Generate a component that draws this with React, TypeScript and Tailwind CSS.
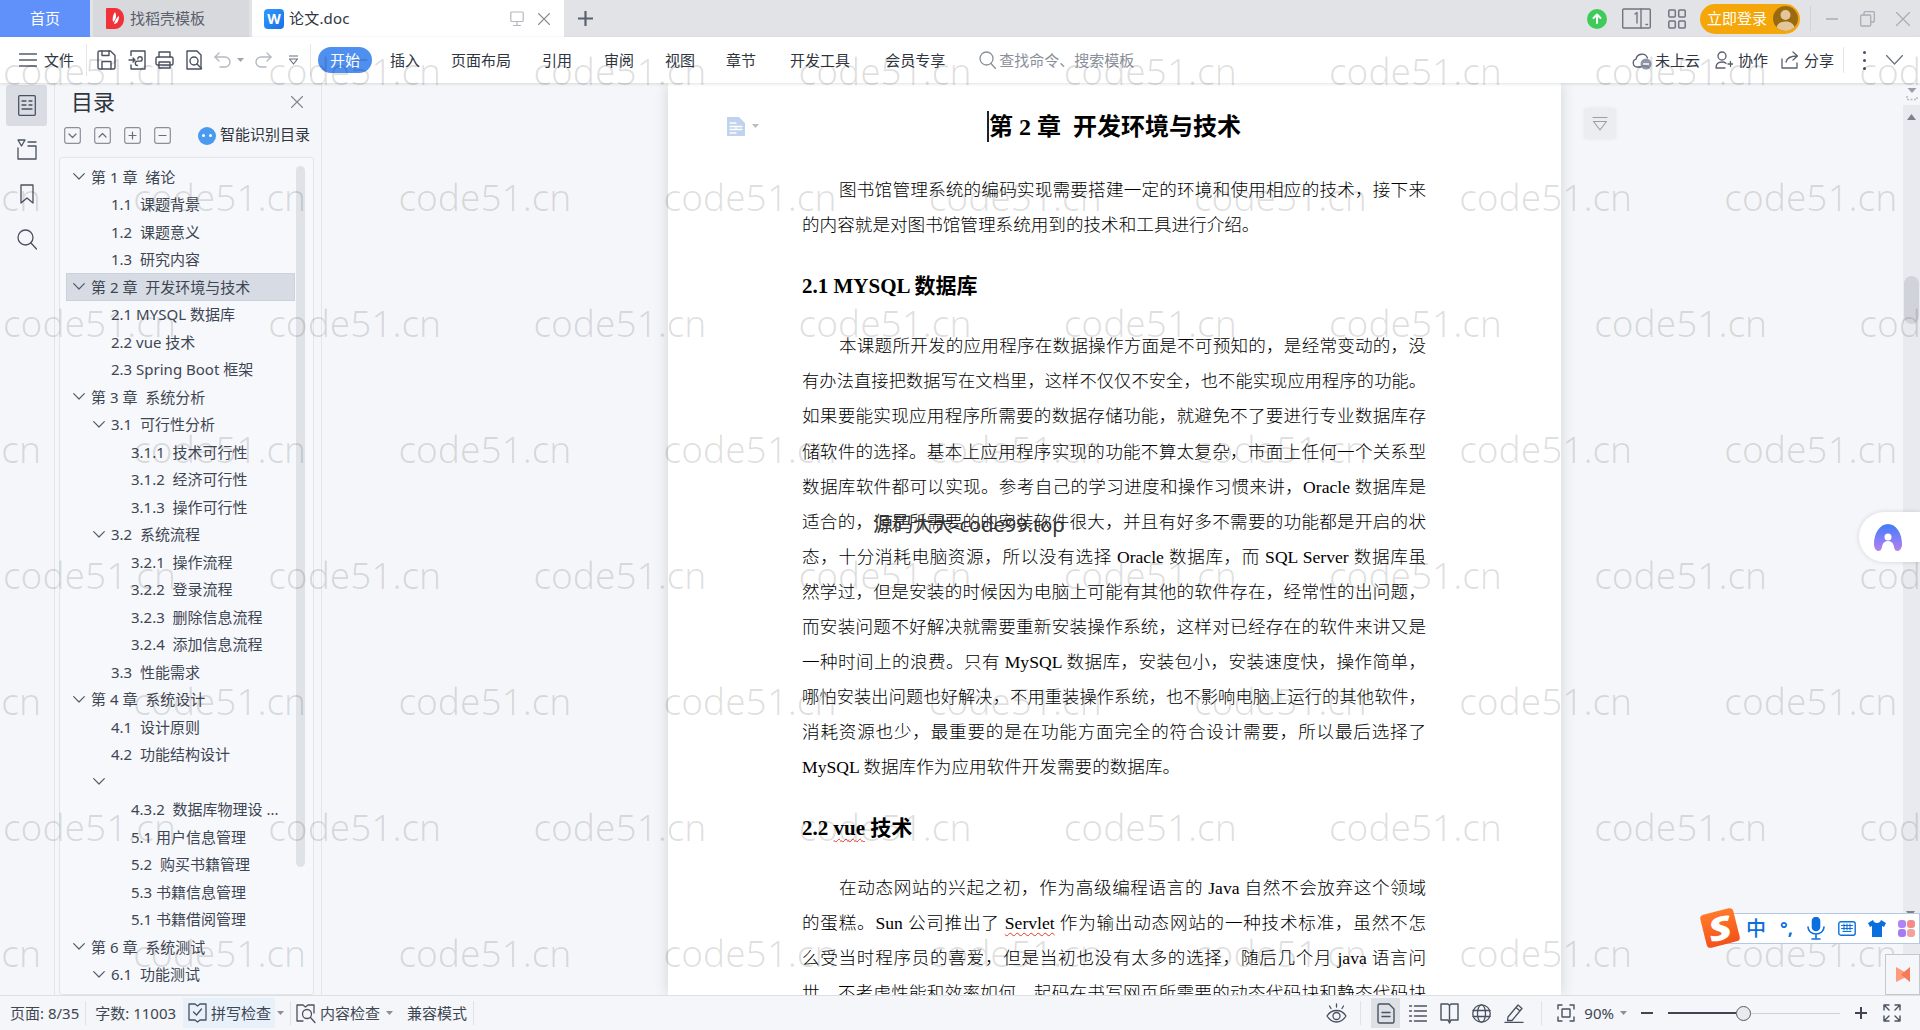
import React from "react";

const UI = "#4a5160";

function Ico({ w = 18, h = 18, vb, c = UI, sw = 1.4, children, className = "" }: { w?: number; h?: number; vb?: string; c?: string; sw?: number; children: React.ReactNode; className?: string }) {
  return (
    <svg width={w} height={h} viewBox={vb ?? `0 0 ${w} ${h}`} fill="none" stroke={c} strokeWidth={sw} strokeLinecap="round" strokeLinejoin="round" className={"shrink-0 " + className}>
      {children}
    </svg>
  );
}

function Caret({ className = "", c = "#8a8f99" }: { className?: string; c?: string }) {
  return (
    <svg width="7" height="4" viewBox="0 0 7 4" className={"shrink-0 " + className}>
      <path d="M0 0h7L3.5 4z" fill={c} />
    </svg>
  );
}

function TitleBar() {
  return (
    <div className="flex h-[37px] shrink-0 items-stretch bg-[#e1e3e7] text-[15px]">
      <div className="flex w-[90px] items-center justify-center bg-[#6090fa] text-white">首页</div>
      <div className="ml-[3px] flex w-[156px] items-center bg-[#d8d9dd] pl-[13px] text-[#5a606c]">
        <svg width="18" height="21" viewBox="0 0 18 21" className="shrink-0">
          <path d="M1 0h8c5 0 9 4.500 9 10.500S14 21 9 21H1a1 1 0 0 1-1-1V1a1 1 0 0 1 1-1z" fill="#f0313a" />
          <path d="M9 4c-2 3-3 6-2 10 3-2 4-6 2-10zM13 8c-2 1-4 4-5 8 3 0 5-3 5-8z" fill="#fff" />
        </svg>
        <span className="ml-[6px]">找稻壳模板</span>
      </div>
      <div className="ml-[3px] flex w-[312px] items-center bg-white pl-[12px] text-[#30353f]">
        <div className="flex h-[20px] w-[20px] shrink-0 items-center justify-center rounded-[4px] bg-gradient-to-br from-[#2f9bff] to-[#1a6fe8] text-[14px] font-bold leading-none text-white">W</div>
        <span className="ml-[5px] tracking-[0.2px]">论文.doc</span>
        <Ico w={14} h={16} c="#b4b8c0" sw={1.2} className="ml-[160px]">
          <rect x="0.8" y="1" width="12.400" height="9.500" rx="1" />
          <path d="M7 10.500v3.500M3.500 14.500h7" />
        </Ico>
        <Ico w={12} h={12} c="#8b909a" sw={1.2} className="ml-[14px]">
          <path d="M0.500 0.500l11 11M11.500 0.500l-11 11" />
        </Ico>
      </div>
      <div className="ml-[14px] flex items-center">
        <Ico w={15} h={15} c="#59606e" sw={2.2}>
          <path d="M7.500 0.500v14M0.500 7.500h14" />
        </Ico>
      </div>
      <div className="ml-auto flex items-center">
        <div className="flex h-[20px] w-[20px] items-center justify-center rounded-full bg-[#3ecb5a]">
          <Ico w={10} h={11} c="#fff" sw={2}>
            <path d="M5 10V2M1.500 5L5 1.500 8.500 5" />
          </Ico>
        </div>
        <Ico w={29} h={21} sw={1.4} c="#6f7583" className="ml-[15px]">
          <rect x="0.700" y="1" width="27.600" height="19" rx="1" />
          <path d="M19 1v19" />
          <path d="M24 16.500h1.500" />
          <path d="M13 6l2-1.500V15" />
        </Ico>
        <Ico w={18} h={20} c="#6f7583" sw={1.5} className="ml-[17px]">
          <rect x="0.800" y="1" width="6.500" height="7" rx="1" />
          <rect x="10.700" y="1" width="6.500" height="7" rx="1" />
          <rect x="0.800" y="12" width="6.500" height="7" rx="1" />
          <rect x="10.700" y="12" width="6.500" height="7" rx="1" />
        </Ico>
        <div className="ml-[14px] flex h-[30px] w-[100px] items-center rounded-full bg-[#f5a70a] pl-[7px] text-white">
          <span>立即登录</span>
          <div className="ml-[6px] flex h-[25px] w-[25px] items-center justify-center overflow-hidden rounded-full bg-[#9a6a10]">
            <svg width="25" height="25" viewBox="0 0 25 25">
              <circle cx="12.500" cy="9" r="5" fill="#e3c79a" />
              <path d="M3 25c0-7 4-9.500 9.500-9.500S22 18 22 25z" fill="#e3c79a" />
            </svg>
          </div>
        </div>
        <div className="ml-[10px] h-[25px] w-px bg-[#cfd2d8]" />
        <Ico w={12} h={2} c="#a8adb6" sw={1.3} className="ml-[15px]">
          <path d="M0 1h12" />
        </Ico>
        <Ico w={15} h={16} c="#a8adb6" sw={1.3} className="ml-[22px]">
          <rect x="0.700" y="4" width="10" height="11" rx="1" />
          <path d="M4 4V1.700a1 1 0 0 1 1-1h8.300a1 1 0 0 1 1 1V10a1 1 0 0 1-1 1h-2.600" />
        </Ico>
        <Ico w={14} h={14} c="#a8adb6" sw={1.3} className="ml-[21px] mr-[10px]">
          <path d="M0.500 0.500l13 13M13.500 0.500l-13 13" />
        </Ico>
      </div>
    </div>
  );
}

function Tab({ t, ml }: { t: string; ml: string }) {
  return <span className={ml + " text-[#30353f]"}>{t}</span>;
}

function Toolbar() {
  return (
    <div className="relative z-10 flex h-[46px] shrink-0 items-center bg-white text-[15px] shadow-[0_1px_3px_rgba(0,0,0,0.12)]">
      <Ico w={18} h={14} c="#555c69" sw={1.3} className="ml-[19px]">
        <path d="M0.500 1h17M0.500 7h17M0.500 13h17" />
      </Ico>
      <span className="ml-[7px] text-[#30353f]">文件</span>
      <div className="ml-[12px] h-[32px] w-px bg-[#e4e6ea]" />
      <Ico w={19} h={20} c={UI} sw={1.4} className="ml-[10px]">
        <path d="M1 2.500a1.500 1.500 0 0 1 1.500-1.500h11L18 5.500v12a1.500 1.500 0 0 1-1.500 1.500h-14A1.500 1.500 0 0 1 1 17.500z" />
        <path d="M5 19v-7.500h9V19M5 1v4.500h7V1" />
      </Ico>
      <Ico w={18} h={20} c={UI} sw={1.4} className="ml-[12px]">
        <path d="M3 5.500V1h14v18H3v-4" />
        <path d="M1 10h6M5 8l2 2-2 2" />
        <path d="M9.500 15.500a2.200 2.200 0 0 1 0-4.400h2.500a2.200 2.200 0 0 0 0-4.400 2.200 2.200 0 0 0-2.200 2.200" />
      </Ico>
      <Ico w={19} h={20} c={UI} sw={1.4} className="ml-[9px]">
        <path d="M4 7V2h11v5" />
        <rect x="1" y="7" width="17" height="8" rx="1.500" />
        <path d="M4 12h11v6H4z" />
      </Ico>
      <Ico w={18} h={20} c={UI} sw={1.4} className="ml-[11px]">
        <path d="M12 1H2v18h14V5z" />
        <circle cx="9" cy="11" r="4" />
        <path d="M12 14l4.500 4.500" />
      </Ico>
      <Ico w={17} h={17} c="#b5b9c1" sw={1.4} className="ml-[11px]">
        <path d="M1 5h10a5 5 0 0 1 0 10H6" />
        <path d="M5 1L1 5l4 4" />
      </Ico>
      <Caret className="ml-[6px]" c="#a0a4ac" />
      <Ico w={17} h={17} c="#b5b9c1" sw={1.4} className="ml-[11px]">
        <path d="M16 5H6a5 5 0 0 0 0 10h5" />
        <path d="M12 1l4 4-4 4" />
      </Ico>
      <Ico w={9} h={10} c="#6a707c" sw={1.2} className="ml-[17px]">
        <path d="M0.500 1h8M0.500 4h8L4.500 9z" />
      </Ico>
      <div className="ml-[12px] h-[32px] w-px bg-[#e4e6ea]" />
      <div className="ml-[7px] flex h-[26px] w-[54px] items-center justify-center rounded-full bg-[#4e8ff0] text-white">开始</div>
      <Tab t="插入" ml="ml-[18px]" />
      <Tab t="页面布局" ml="ml-[31px]" />
      <Tab t="引用" ml="ml-[31px]" />
      <Tab t="审阅" ml="ml-[32px]" />
      <Tab t="视图" ml="ml-[31px]" />
      <Tab t="章节" ml="ml-[31px]" />
      <Tab t="开发工具" ml="ml-[34px]" />
      <Tab t="会员专享" ml="ml-[35px]" />
      <Ico w={17} h={18} c="#8a8f99" sw={1.3} className="ml-[34px]">
        <circle cx="7.500" cy="7.500" r="6.500" />
        <path d="M12 12.500l4.500 5" />
      </Ico>
      <span className="ml-[3px] text-[#8a8f99]">查找命令、搜索模板</span>
      <div className="ml-auto flex items-center">
        <Ico w={20} h={20} c="#5a606c" sw={1.3}>
          <path d="M9 17H5a4 4 0 0 1-1-7.800A6 6 0 0 1 15.500 8" />
          <circle cx="14" cy="14" r="5.500" fill="#8f96a5" stroke="none" />
          <path d="M11.500 14h5" stroke="#fff" />
        </Ico>
        <span className="ml-[3px] text-[#30353f]">未上云</span>
        <Ico w={18} h={18} c="#5a606c" sw={1.3} className="ml-[15px]">
          <circle cx="7" cy="5" r="4" />
          <path d="M1 17c0-4 2.500-6 6-6 1.500 0 3 .4 4 1.300M1 17h9M13 13h5M15.500 10.500v5" />
        </Ico>
        <span className="ml-[5px] text-[#30353f]">协作</span>
        <Ico w={18} h={18} c="#5a606c" sw={1.3} className="ml-[13px]">
          <path d="M1 8v9h15v-5" />
          <path d="M5 11c1-4 4-6 11-6M12 1l4.500 4L12 9" />
        </Ico>
        <span className="ml-[5px] text-[#30353f]">分享</span>
        <div className="ml-[9px] h-[26px] w-px bg-[#e4e6ea]" />
        <div className="ml-[19px] flex flex-col gap-[5px]">
          <div className="h-[3px] w-[3px] rounded-full bg-[#4a5160]" />
          <div className="h-[3px] w-[3px] rounded-full bg-[#4a5160]" />
          <div className="h-[3px] w-[3px] rounded-full bg-[#4a5160]" />
        </div>
        <Ico w={17} h={10} c="#6a707c" sw={1.2} className="ml-[20px] mr-[17px]">
          <path d="M0.500 0.500L8.500 9l8-8.500" />
        </Ico>
      </div>
    </div>
  );
}

function Rail() {
  return (
    <div className="flex w-[55px] shrink-0 flex-col items-center border-r border-[#e2e5ea] pt-[2px] pr-[1px]">
      <div className="flex h-[41px] w-[41px] items-center justify-center rounded-[3px] bg-[#d9dde3]">
        <Ico w={18} h={21} c="#4a5160" sw={1.3}>
          <rect x="0.700" y="0.700" width="16.600" height="19.600" rx="1" />
          <path d="M4 6h4M11 6h3M4 10h4M11 10h3M4 14h10" />
        </Ico>
      </div>
      <Ico w={20} h={21} c={UI} sw={1.3} className="mt-[13px]">
        <path d="M1 1h7L4.500 7zM11 3h8M1 9v11h18V7H11" />
      </Ico>
      <Ico w={14} h={20} c={UI} sw={1.3} className="mt-[24px]">
        <path d="M1 1h12v18l-6-5-6 5z" />
      </Ico>
      <Ico w={20} h={21} c={UI} sw={1.3} className="mt-[25px]">
        <circle cx="8.500" cy="8.500" r="7.500" />
        <path d="M14 14l5.500 6" />
      </Ico>
    </div>
  );
}

type Row = [number, string, boolean?];
const rows: Row[] = [
  [1, "第 1 章  绪论", true],
  [2, "1.1  课题背景"],
  [2, "1.2  课题意义"],
  [2, "1.3  研究内容"],
  [1, "第 2 章  开发环境与技术", true],
  [2, "2.1 MYSQL 数据库"],
  [2, "2.2 vue 技术"],
  [2, "2.3 Spring Boot 框架"],
  [1, "第 3 章  系统分析", true],
  [2, "3.1  可行性分析", true],
  [3, "3.1.1  技术可行性"],
  [3, "3.1.2  经济可行性"],
  [3, "3.1.3  操作可行性"],
  [2, "3.2  系统流程", true],
  [3, "3.2.1  操作流程"],
  [3, "3.2.2  登录流程"],
  [3, "3.2.3  删除信息流程"],
  [3, "3.2.4  添加信息流程"],
  [2, "3.3  性能需求"],
  [1, "第 4 章  系统设计", true],
  [2, "4.1  设计原则"],
  [2, "4.2  功能结构设计"],
  [2, "", true],
  [3, "4.3.2  数据库物理设 ..."],
  [3, "5.1 用户信息管理"],
  [3, "5.2  购买书籍管理"],
  [3, "5.3 书籍信息管理"],
  [3, "5.1 书籍借阅管理"],
  [1, "第 6 章  系统测试", true],
  [2, "6.1  功能测试", true],
];

function TreeRow({ row, active }: { row: Row; active: boolean }) {
  const [lvl, text, chev] = row;
  const pad = chev ? (lvl === 1 ? "pl-[7px]" : "pl-[27px]") : lvl === 2 ? "pl-[45px]" : "pl-[65px]";
  return (
    <div className={"flex h-[27.5px] items-center whitespace-pre text-[15px] text-[#3f4653] " + pad + (active ? " bg-[#d6dbe4] outline outline-1 -outline-offset-1 outline-[#cbd2dd]" : "")}>
      {chev && (
        <Ico w={12} h={7} c="#555c69" sw={1.2} className="mr-[6px]">
          <path d="M0.700 0.700L6 6l5.300-5.300" />
        </Ico>
      )}
      <span>{text}</span>
    </div>
  );
}

function SquareBtn({ d }: { d: string }) {
  return (
    <Ico w={17} h={17} c="#8a8f99" sw={1.2}>
      <rect x="0.700" y="0.700" width="15.600" height="15.600" rx="2" />
      <path d={d} stroke="#666c78" />
    </Ico>
  );
}

function Panel() {
  return (
    <div className="flex w-[267px] shrink-0 flex-col border-r border-[#e2e5ea]">
      <div className="flex h-[37px] shrink-0 items-center pl-[16px]">
        <span className="text-[22px] text-[#30353f]">目录</span>
        <Ico w={12} h={12} c="#80858f" sw={1.1} className="ml-[176px]">
          <path d="M0.500 0.500l11 11M11.500 0.500l-11 11" />
        </Ico>
      </div>
      <div className="mt-[7px] flex h-[17px] shrink-0 items-center pl-[9px]">
        <div className="flex gap-[13px]">
          <SquareBtn d="M5 7l3.500 3.500L12 7" />
          <SquareBtn d="M5 10l3.500-3.500L12 10" />
          <SquareBtn d="M5 8.500h7M8.500 5v7" />
          <SquareBtn d="M5 8.500h7" />
        </div>
        <div className="ml-[27px] flex h-[18px] w-[18px] items-center justify-center gap-[4px] rounded-full bg-[#4a9bf0]">
          <div className="h-[3px] w-[3px] rounded-full bg-white" />
          <div className="h-[3px] w-[3px] rounded-full bg-white" />
        </div>
        <span className="mb-[2px] ml-[4px] whitespace-nowrap text-[15px] text-[#30353f]">智能识别目录</span>
      </div>
      <div className="ml-[4px] mt-[13px] flex min-h-0 w-[255px] flex-1 overflow-hidden rounded-[3px] border border-[#e2e5ea] bg-[#f6f8fb]">
        <div className="ml-[6px] w-[229px] shrink-0 pt-[5px]">
          {rows.map((r, i) => (
            <TreeRow key={i} row={r} active={i === 4} />
          ))}
        </div>
        <div className="ml-px mt-[8px] h-[701px] w-[9px] shrink-0 rounded-full bg-[#dfe2e6]" />
      </div>
    </div>
  );
}

const LINE = "h-[35.1px] leading-[35.1px] overflow-visible";
const JUST = " text-justify [text-align-last:justify]";

function L({ children, indent, last, tight }: { children: React.ReactNode; indent?: boolean; last?: boolean; tight?: boolean }) {
  return <div className={LINE + (last ? "" : JUST) + (indent ? " pl-[37px]" : "") + (tight ? " text-[17.2px]" : "")}>{children}</div>;
}

const Sq = ({ children }: { children: React.ReactNode }) => (
  <span className="underline decoration-[#e0392b] decoration-wavy decoration-1 underline-offset-[3px]">{children}</span>
);

function DocPage() {
  return (
    <div className="h-full w-[893px] shrink-0 overflow-hidden bg-white font-['Liberation_Serif','Noto_Sans_CJK_SC',serif] text-black shadow-[0_0_14px_rgba(0,0,0,0.14)]">
      <div className="ml-[59px] mt-[23px] flex h-[40px] items-center">
        <Ico w={18} h={19} c="#fff" sw={1.3}>
          <path d="M0 0h12l6 6v13H0z" fill="#bfd2ee" stroke="none" />
          <path d="M3 6h6M3 9.500h12M9 9.500v3M3 12.500h12M3 16h6" />
        </Ico>
        <Caret className="ml-[7px]" c="#b8bcc4" />
        <div className="ml-[228px] h-[31px] w-[2px] shrink-0 bg-[#1d2230]" />
        <div className="mt-[2px] whitespace-pre text-[24px] font-bold leading-none">第 2 章  开发环境与技术</div>
      </div>
      <div className="ml-[134px] w-[624px] text-[17.6px] font-light">
        <div className="mt-[26.5px]">
          <L indent>图书馆管理系统的编码实现需要搭建一定的环境和使用相应的技术，接下来</L>
          <L last>的内容就是对图书馆管理系统用到的技术和工具进行介绍。</L>
        </div>
        <div className="mt-[25px] h-[35.1px] pt-px text-[21px] font-bold leading-[35.1px]">2.1 MYSQL 数据库</div>
        <div className="mt-[26.5px]">
          <L indent>本课题所开发的应用程序在数据操作方面是不可预知的，是经常变动的，没</L>
          <L tight>有办法直接把数据写在文档里，这样不仅仅不安全，也不能实现应用程序的功能。</L>
          <L>如果要能实现应用程序所需要的数据存储功能，就避免不了要进行专业数据库存</L>
          <L>储软件的选择。基本上应用程序实现的功能不算太复杂，市面上任何一个关系型</L>
          <L>数据库软件都可以实现。参考自己的学习进度和操作习惯来讲，Oracle 数据库是</L>
          <div className="relative">
            <L>适合的，但是所需要的的安装软件很大，并且有好多不需要的功能都是开启的状</L>
            <span className="absolute left-[71px] top-[2px] whitespace-nowrap font-['Noto_Sans','Noto_Sans_CJK_SC',sans-serif] text-[20px] font-normal leading-[35px] text-[#333]">源码大大-code99.top</span>
          </div>
          <L>态，十分消耗电脑资源，所以没有选择 Oracle 数据库，而 SQL Server 数据库虽</L>
          <L>然学过，但是安装的时候因为电脑上可能有其他的软件存在，经常性的出问题，</L>
          <L>而安装问题不好解决就需要重新安装操作系统，这样对已经存在的软件来讲又是</L>
          <L>一种时间上的浪费。只有 MySQL 数据库，安装包小，安装速度快，操作简单，</L>
          <L tight>哪怕安装出问题也好解决，不用重装操作系统，也不影响电脑上运行的其他软件，</L>
          <L>消耗资源也少，最重要的是在功能方面完全的符合设计需要，所以最后选择了</L>
          <L last>MySQL 数据库作为应用软件开发需要的数据库。</L>
        </div>
        <div className="mt-[25px] h-[35.1px] text-[21px] font-bold leading-[35.1px]">
          2.2 <Sq>vue</Sq> 技术
        </div>
        <div className="mt-[25px]">
          <L indent>在动态网站的兴起之初，作为高级编程语言的 Java 自然不会放弃这个领域</L>
          <L>的蛋糕。Sun 公司推出了 <Sq>Servlet</Sq> 作为输出动态网站的一种技术标准，虽然不怎</L>
          <L>么受当时程序员的喜爱，但是当初也没有太多的选择，随后几个月 java 语言问</L>
          <L>世，不考虑性能和效率如何，起码在书写网页所需要的动态代码块和静态代码块</L>
        </div>
      </div>
    </div>
  );
}

function RightGutter() {
  return (
    <div className="flex min-w-0 flex-1">
      <div className="flex-1 pl-[23px] pt-[25px]">
        <div className="flex h-[31px] w-[32px] items-center justify-center rounded-[3px] bg-[#ecedef] shadow-[0_0_4px_rgba(0,0,0,0.06)]">
          <Ico w={16} h={16} c="#9a9ea6" sw={1.1}>
            <path d="M1 1.500h14M1.500 5.500h13L8 14z" />
          </Ico>
        </div>
      </div>
      <div className="flex w-[17px] shrink-0 flex-col items-center bg-[#e8eaef]">
        <div className="flex h-[22px] w-full items-center justify-center bg-[#f4f6f9]">
          <svg width="12" height="13" viewBox="0 0 12 13">
            <path d="M1.500 0h9L6 5z" fill="#9aa0ab" />
            <path d="M1 8v3.500h10V8" stroke="#b5b9c2" strokeWidth="1.500" strokeDasharray="2 1.500" fill="none" />
          </svg>
        </div>
        <svg width="9" height="6" viewBox="0 0 9 6" className="mt-[9px]">
          <path d="M0 6L4.500 0 9 6z" fill="#7b818d" />
        </svg>
        <div className="mt-[156px] h-[48px] w-[15px] rounded-full bg-[#d0d4da]" />
      </div>
    </div>
  );
}

function StatusSep({ ml }: { ml: string }) {
  return <div className={ml + " h-[24px] w-px bg-[#dfe2e6]"} />;
}

function StatusBar() {
  return (
    <div className="flex h-[35px] shrink-0 items-center border-t border-[#dcdfe4] bg-[#f4f6f9] text-[15px] text-[#3f4653]">
      <span className="ml-[10px] whitespace-nowrap">页面: 8/35</span>
      <StatusSep ml="ml-[6px]" />
      <span className="ml-[9px] whitespace-nowrap">字数: 11003</span>
      <div className="ml-[7px] flex h-[30px] w-[92px] items-center bg-[#e8f0fa] pl-[5px]">
        <Ico w={19} h={20} c={UI} sw={1.3}>
          <path d="M1 1h6l2.500 2L12 1h6v16h-6l-2.500 2L7 17H1z" />
          <path d="M5.500 9l3 3 5-6" />
        </Ico>
        <span className="ml-[4px] whitespace-nowrap">拼写检查</span>
      </div>
      <Caret className="ml-[2px]" />
      <StatusSep ml="ml-[6px]" />
      <Ico w={20} h={21} c={UI} sw={1.3} className="ml-[5px]">
        <path d="M7 18H1V2h6l2.500 2L12 2h6v8" />
        <circle cx="11" cy="11" r="4.500" />
        <path d="M14.500 14.500l4.500 5" />
      </Ico>
      <span className="ml-[4px] whitespace-nowrap">内容检查</span>
      <Caret className="ml-[6px]" />
      <span className="ml-[14px] whitespace-nowrap">兼容模式</span>
      <StatusSep ml="ml-[6px]" />
      <div className="ml-auto flex items-center">
        <Ico w={21} h={21} c={UI} sw={1.3}>
          <path d="M1 13c2.500-4 6-5.500 9.500-5.500S17.500 9 20 13c-2.500 4-6 6-9.500 6S3.500 17 1 13z" />
          <circle cx="10.500" cy="13" r="3.500" />
          <path d="M10.500 1v3M3.500 3l1.500 2.500M17.500 3L16 5.500" />
        </Ico>
        <div className="ml-[13px] h-[24px] w-px bg-[#dfe2e6]" />
        <div className="ml-[10px] flex h-[30px] w-[29px] items-center justify-center bg-[#dde1e6]">
          <Ico w={18} h={21} c={UI} sw={1.4}>
            <path d="M1 2.500A1.500 1.500 0 0 1 2.500 1H12l5 5v12.500a1.500 1.500 0 0 1-1.500 1.500h-13A1.500 1.500 0 0 1 1 18.500z" />
            <path d="M5 9.500h8M5 13.500h8" />
          </Ico>
        </div>
        <Ico w={18} h={19} c={UI} sw={1.4} className="ml-[9px]">
          <path d="M0.500 2h2M5.500 2h12M0.500 7h2M5.500 7h12M0.500 12h2M5.500 12h12M0.500 17h2M5.500 17h12" />
        </Ico>
        <Ico w={19} h={21} c={UI} sw={1.4} className="ml-[13px]">
          <path d="M1 1h7l1.500 1.500L11 1h7v16h-7l-1.500 3L8 17H1zM9.500 2.500V17" />
        </Ico>
        <Ico w={19} h={19} c={UI} sw={1.3} className="ml-[13px]">
          <circle cx="9.500" cy="9.500" r="8.700" />
          <ellipse cx="9.500" cy="9.500" rx="4" ry="8.700" />
          <path d="M1 6.500h17M1 12.500h17" />
        </Ico>
        <Ico w={20} h={20} c={UI} sw={1.3} className="ml-[13px]">
          <path d="M4 14L14 2l4 3.500-10 12H3.500zM12 4.500l4 3.500M1 19.500h18" />
        </Ico>
        <div className="ml-[17px] h-[24px] w-px bg-[#dfe2e6]" />
        <Ico w={18} h={18} c={UI} sw={1.4} className="ml-[15px]">
          <path d="M1 5V1h4M13 1h4v4M17 13v4h-4M5 17H1v-4" />
          <rect x="5" y="5" width="8" height="8" rx="0.500" />
        </Ico>
        <span className="ml-[9px] whitespace-nowrap">90%</span>
        <Caret className="ml-[6px]" />
        <div className="ml-[14px] h-[2px] w-[12px] bg-[#3f4653]" />
        <div className="ml-[15px] flex h-[15px] w-[172px] items-center">
          <div className="h-[1.500px] w-[68px] bg-[#3f4653]" />
          <div className="h-[15px] w-[15px] shrink-0 rounded-full border-[1.500px] border-[#555c69] bg-[#e8eaee]" />
          <div className="h-px flex-1 bg-[#cfd3d9]" />
        </div>
        <Ico w={12} h={12} c="#3f4653" sw={2} className="ml-[15px]">
          <path d="M6 0.500v11M0.500 6h11" />
        </Ico>
        <Ico w={18} h={18} c={UI} sw={1.4} className="ml-[16px] mr-[19px]">
          <path d="M6 1H1v5M1 1l5 5M12 1h5v5M17 1l-5 5M1 12v5h5M1 17l5-5M17 12v5h-5M17 17l-5-5" />
        </Ico>
      </div>
    </div>
  );
}

function Watermark() {
  const rowsN = [0, 1, 2, 3, 4, 5, 6, 7];
  const cols = [0, 1, 2, 3, 4, 5, 6, 7];
  return (
    <div className="pointer-events-none absolute inset-x-0 bottom-[35px] top-[37px] z-20 overflow-hidden">
      <div className="-mt-[29px] font-['Noto_Sans',sans-serif] text-[37px] font-light text-[#00000021]">
        {rowsN.map((r) => (
          <div key={r} className={"flex h-[126px] items-center " + (r % 2 === 0 ? "ml-[3px]" : "-ml-[132px]")}>
            {cols.concat(r % 2 === 0 ? [] : [8]).map((c) => (
              <span key={c} className="w-[265.2px] shrink-0">code51.cn</span>
            ))}
          </div>
        ))}
      </div>
    </div>
  );
}

function Floaters() {
  return (
    <>
      <div className="absolute right-0 top-[512px] z-30 flex h-[50px] w-[61px] items-center rounded-l-full bg-white pl-[15px] shadow-[0_0_5px_rgba(0,0,0,0.14)]">
        <svg width="28" height="27" viewBox="0 0 28 27">
          <defs>
            <linearGradient id="aig" x1="0" y1="0" x2="0" y2="1">
              <stop offset="0" stopColor="#3f7dfb" />
              <stop offset="1" stopColor="#b67ff0" />
            </linearGradient>
          </defs>
          <path fillRule="evenodd" d="M14 0c8 0 14 9 14 20 0 4-2 7-4.500 7-3 0-3-3-4-6-.8-2.500-3-4-5.500-4s-4.700 1.500-5.500 4c-1 3-1 6-4 6C2 27 0 24 0 20 0 9 6 0 14 0zm0 9.500a3.500 3.500 0 1 0 0 7 3.500 3.500 0 0 0 0-7z" fill="url(#aig)" />
        </svg>
      </div>
      <div className="absolute left-[1703px] top-[911px] z-30 flex w-[217px] items-center">
        <div className="z-10 flex h-[34px] w-[34px] shrink-0 rotate-[-14deg] items-center justify-center rounded-[4px] bg-gradient-to-b from-[#ff7a2a] to-[#f4501a] text-[32px] font-black italic leading-none text-white">
          <span className="inline-block scale-x-[1.35]">S</span>
        </div>
        <div className="-ml-[12px] flex h-[31px] flex-1 items-center border border-[#b3c9e6] bg-white pl-[20px] text-[#0c6fde]">
          <span className="font-['Noto_Sans_CJK_SC',sans-serif] text-[20px] font-medium leading-none">中</span>
          <span className="ml-[14px] w-[14px] text-[18px] font-bold leading-none">°,</span>
          <Ico w={18} h={23} c="#0c6fde" sw={1.6} className="ml-[13px]">
            <rect x="5.500" y="0.500" width="7" height="13" rx="3.500" fill="#0c6fde" />
            <path d="M1 10c0 4 3.500 7 8 7s8-3 8-7M9 17v4M5 22h8" />
          </Ico>
          <Ico w={18} h={15} c="#0c6fde" sw={1.4} className="ml-[13px]">
            <rect x="0.800" y="0.800" width="16.400" height="13.400" rx="2" />
            <path d="M3.500 4.500h11M3.500 7.500h11M5 10.500h8M6 3v6M9 3v6M12 3v6" strokeWidth="1.100" />
          </Ico>
          <svg width="18" height="17" viewBox="0 0 18 17" className="ml-[12px] shrink-0">
            <path d="M5 0L0 3l2 4 2-1v11h10V6l2 1 2-4-5-3c-.5 2-2 3-4 3S5.500 2 5 0z" fill="#0c6fde" />
          </svg>
          <svg width="17" height="17" viewBox="0 0 17 17" className="ml-[12px] shrink-0">
            <rect x="0" y="0" width="8" height="8" rx="3" fill="#b084f5" />
            <rect x="9" y="0" width="8" height="8" rx="3" fill="#f48a8a" />
            <rect x="0" y="9" width="8" height="8" rx="3" fill="#a57cf5" />
            <rect x="9" y="9" width="8" height="8" rx="3" fill="#f5a0a0" />
          </svg>
        </div>
      </div>
      <div className="absolute left-[1885px] top-[954px] z-30 flex h-[41px] w-[35px] items-center justify-center border border-[#c4c7cc] bg-[#f4f6f9]">
        <svg width="14" height="15" viewBox="0 0 14 15">
          <path d="M0 0l14 8-14 7z" fill="#ff9a7a" />
          <path d="M14 0v15L5 7.500z" fill="#f7795a" />
        </svg>
      </div>
      <svg width="9" height="6" viewBox="0 0 9 6" className="absolute left-[1906px] top-[911px] z-10">
        <path d="M0 0h9L4.500 6z" fill="#7b818d" />
      </svg>
    </>
  );
}

export default function App() {
  return (
    <div className="relative flex h-[1030px] w-[1920px] flex-col overflow-hidden bg-[#f4f6f9] font-['Noto_Sans','Noto_Sans_CJK_SC',sans-serif]">
      <TitleBar />
      <Toolbar />
      <div className="flex min-h-0 flex-1">
        <Rail />
        <Panel />
        <div className="flex min-w-0 flex-1 pl-[346px]">
          <DocPage />
          <RightGutter />
        </div>
      </div>
      <StatusBar />
      <Watermark />
      <Floaters />
    </div>
  );
}
